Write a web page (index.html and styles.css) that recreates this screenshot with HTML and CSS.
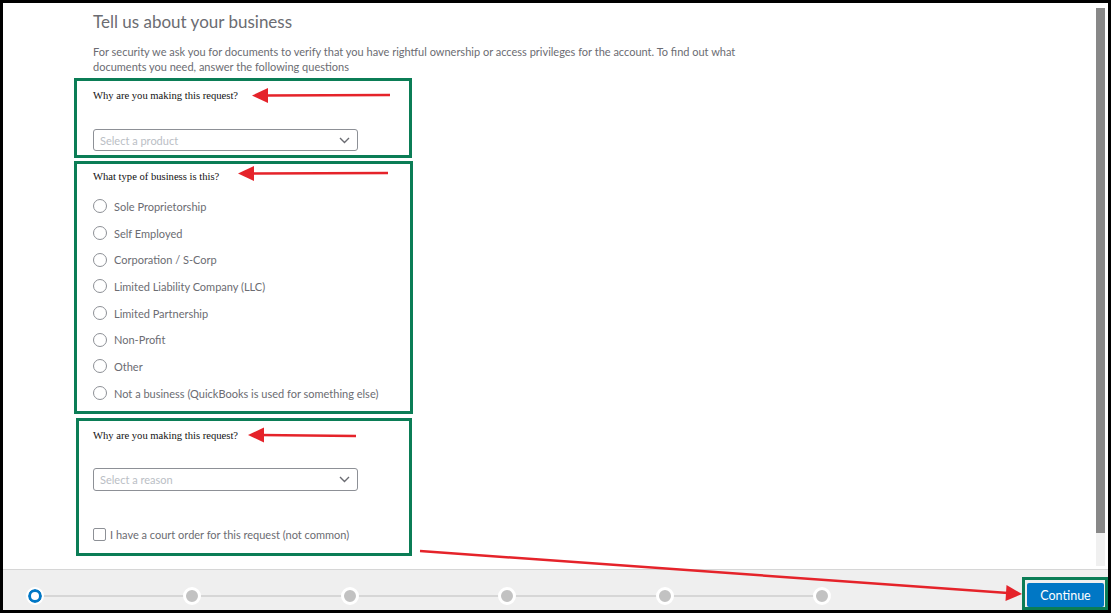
FILE: index.html
```html
<!DOCTYPE html>
<html lang="en">
<head>
<meta charset="utf-8">
<title>Tell us about your business</title>
<link rel="stylesheet" href="styles.css">
</head>
<body>
<div class="frame">
  <div class="main">
    <div class="content">
      <h1 class="title">Tell us about your business</h1>
      <p class="intro">For security we ask you for documents to verify that you have rightful ownership or access privileges for the account. To find out what documents you need, answer the following questions</p>

      <section class="box box-product">
        <div class="q">Why are you making this request?</div>
        <div class="select select-product">
          <span class="placeholder">Select a product</span>
          <svg class="chev" width="11" height="7" viewBox="0 0 11 7"><polyline points="1,1 5.5,5.5 10,1" fill="none" stroke="#6b6c72" stroke-width="1.4"/></svg>
        </div>
      </section>

      <section class="box box-type">
        <div class="q">What type of business is this?</div>
        <ul class="radios">
          <li class="radio-row"><span class="radio"></span><span class="opt">Sole Proprietorship</span></li>
          <li class="radio-row"><span class="radio"></span><span class="opt">Self Employed</span></li>
          <li class="radio-row"><span class="radio"></span><span class="opt">Corporation / S-Corp</span></li>
          <li class="radio-row"><span class="radio"></span><span class="opt">Limited Liability Company (LLC)</span></li>
          <li class="radio-row"><span class="radio"></span><span class="opt">Limited Partnership</span></li>
          <li class="radio-row"><span class="radio"></span><span class="opt">Non-Profit</span></li>
          <li class="radio-row"><span class="radio"></span><span class="opt">Other</span></li>
          <li class="radio-row"><span class="radio"></span><span class="opt">Not a business (QuickBooks is used for something else)</span></li>
        </ul>
      </section>

      <section class="box box-reason">
        <div class="q">Why are you making this request?</div>
        <div class="select select-reason">
          <span class="placeholder">Select a reason</span>
          <svg class="chev" width="11" height="7" viewBox="0 0 11 7"><polyline points="1,1 5.5,5.5 10,1" fill="none" stroke="#6b6c72" stroke-width="1.4"/></svg>
        </div>
        <div class="check-row"><span class="checkbox"></span><span class="opt">I have a court order for this request (not common)</span></div>
      </section>
    </div>
    <div class="scrollbar"><div class="thumb"></div></div>
  </div>

  <footer class="footer">
    <div class="stepper">
      <span class="step step-current"></span>
      <span class="step"></span>
      <span class="step"></span>
      <span class="step"></span>
      <span class="step"></span>
      <span class="step"></span>
    </div>
    <div class="continue-box"><button class="continue">Continue</button></div>
  </footer>

  <svg class="annotations" width="1111" height="613" viewBox="0 0 1111 613">
    <g stroke="#e5232a" stroke-width="2.4" fill="#e5232a">
      <line x1="390" y1="95" x2="264" y2="95.5"/>
      <polygon points="252,95.5 268,88 268,103" stroke="none"/>
      <line x1="388" y1="173" x2="250" y2="173.5"/>
      <polygon points="238,173.5 254,166 254,181" stroke="none"/>
      <line x1="356" y1="436" x2="260" y2="435"/>
      <polygon points="248,435 264,427.5 264,442.5" stroke="none"/>
      <line x1="420" y1="551" x2="1008" y2="593"/>
      <polygon points="1022,594 1006.5,585 1005.5,601" stroke="none"/>
    </g>
  </svg>
</div>
</body>
</html>
```

FILE: styles.css
```css
* { box-sizing: border-box; }
html, body { margin: 0; padding: 0; background: #fff; }
body { font-family: Lato, "Open Sans", sans-serif; color: #6b6c72; }

.frame {
  position: relative;
  width: 1111px;
  height: 613px;
  border: 3px solid #000;
  display: flex;
  flex-direction: column;
  background: #fff;
  overflow: hidden;
}

.main { flex: 1; display: flex; min-height: 0; }
.content { flex: 1; padding-left: 71px; }

.scrollbar {
  width: 9px;
  margin: 5px 3px 3px 0;
  background: #f0f0f0;
}
.thumb { height: 525px; background: #888; }

.title {
  margin: 0 0 0 19px;
  padding-top: 8px;
  font-size: 17px;
  line-height: 22px;
  font-weight: 400;
  color: #6b6c72;
}
.intro {
  margin: 11px 0 0 19px;
  width: 665px;
  font-size: 11px;
  line-height: 15px;
  color: #6b6c72;
}

.box {
  border: 3px solid #0b7d56;
  width: 338px;
  padding-left: 16px;
}
.box-product { margin-top: 4px; padding-top: 8px; padding-bottom: 4px; }
.box-type { margin-top: 3px; width: 339px; padding-top: 6px; padding-bottom: 4px; }
.box-reason { margin-top: 4px; margin-left: 2px; width: 336px; padding-left: 14px; padding-top: 8px; padding-bottom: 12px; }

.q {
  font-family: "Liberation Serif", "Times New Roman", serif;
  font-size: 10.6px;
  line-height: 14px;
  color: #111;
}

.select {
  display: flex;
  align-items: center;
  justify-content: space-between;
  width: 265px;
  height: 22px;
  border: 1px solid #8d9096;
  border-radius: 3px;
  padding: 0 7px 0 6px;
}
.select-product { margin-top: 26px; }
.select-reason { margin-top: 25px; height: 23px; }
.placeholder { font-size: 11px; color: #babec5; }
.chev { display: block; }

.radios { list-style: none; margin: 9px 0 0; padding: 0; }
.radio-row {
  display: flex;
  align-items: center;
  height: 26.7px;
}
.radio {
  width: 14px;
  height: 14px;
  border: 1px solid #8d9096;
  border-radius: 50%;
  margin-right: 7px;
  flex: none;
}
.opt { font-size: 11px; color: #6b6c72; }

.check-row {
  display: flex;
  align-items: center;
  margin-top: 37px;
}
.checkbox {
  width: 13px;
  height: 13px;
  border: 1px solid #8d9096;
  border-radius: 2px;
  margin-right: 4px;
  flex: none;
}

.footer {
  height: 41px;
  flex: none;
  display: flex;
  align-items: center;
  background: #efefef;
  border-top: 1px solid #d6d6d6;
}
.stepper {
  width: 805px;
  margin-left: 23px;
  margin-top: 12px;
  display: flex;
  align-items: center;
  justify-content: space-between;
  background: linear-gradient(#d6d6d6, #d6d6d6) center / 100% 2px no-repeat;
}
.step {
  width: 18px;
  height: 18px;
  border-radius: 50%;
  background: #c2c2c2;
  border: 3px solid #fff;
}
.step-current {
  background: #fff;
  box-shadow: inset 0 0 0 3px #0077c5;
  border: 2px solid #fff;
}

.continue-box {
  margin-left: auto;
  align-self: flex-end;
  border: 3px solid #0b7d56;
  padding: 3px 1px 1px 2px;
  width: 86px;
  height: 33px;
}
.continue {
  display: block;
  width: 77px;
  height: 24px;
  border: none;
  border-radius: 2px;
  background: #0077c5;
  color: #fff;
  font-family: Lato, "Open Sans", sans-serif;
  font-size: 12.5px;
  padding: 0;
}

.annotations {
  position: absolute;
  left: -3px;
  top: -3px;
  pointer-events: none;
}
```
